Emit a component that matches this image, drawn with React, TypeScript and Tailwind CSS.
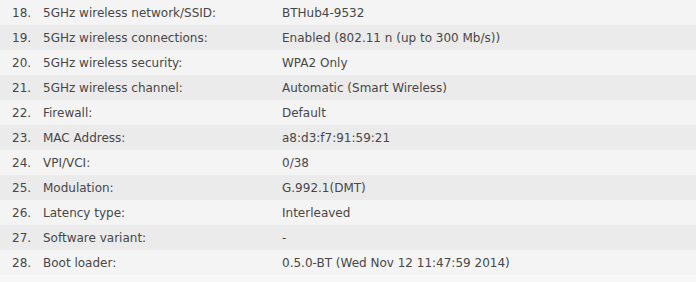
import React from 'react';

const rows: [string, string, string][] = [
  ['18.', '5GHz wireless network/SSID:', 'BTHub4-9532'],
  ['19.', '5GHz wireless connections:', 'Enabled (802.11 n (up to 300 Mb/s))'],
  ['20.', '5GHz wireless security:', 'WPA2 Only'],
  ['21.', '5GHz wireless channel:', 'Automatic (Smart Wireless)'],
  ['22.', 'Firewall:', 'Default'],
  ['23.', 'MAC Address:', 'a8:d3:f7:91:59:21'],
  ['24.', 'VPI/VCI:', '0/38'],
  ['25.', 'Modulation:', 'G.992.1(DMT)'],
  ['26.', 'Latency type:', 'Interleaved'],
  ['27.', 'Software variant:', '-'],
  ['28.', 'Boot loader:', '0.5.0-BT (Wed Nov 12 11:47:59 2014)'],
];

export default function App() {
  return (
    <div className="w-[696px] h-[282px] bg-[#f7f7f7] text-[#474747] text-[12px] font-['DejaVu_Sans',sans-serif] overflow-hidden">
      {rows.map(([n, label, value], i) => (
        <div
          key={n}
          className={`grid grid-cols-[43px_239px_1fr] h-[25px] items-center ${i % 2 === 0 ? 'bg-[#f4f4f4]' : 'bg-[#ebebeb]'}`}
        >
          <span className="pl-[12px]">{n}</span>
          <span>{label}</span>
          <span>{value}</span>
        </div>
      ))}
    </div>
  );
}
